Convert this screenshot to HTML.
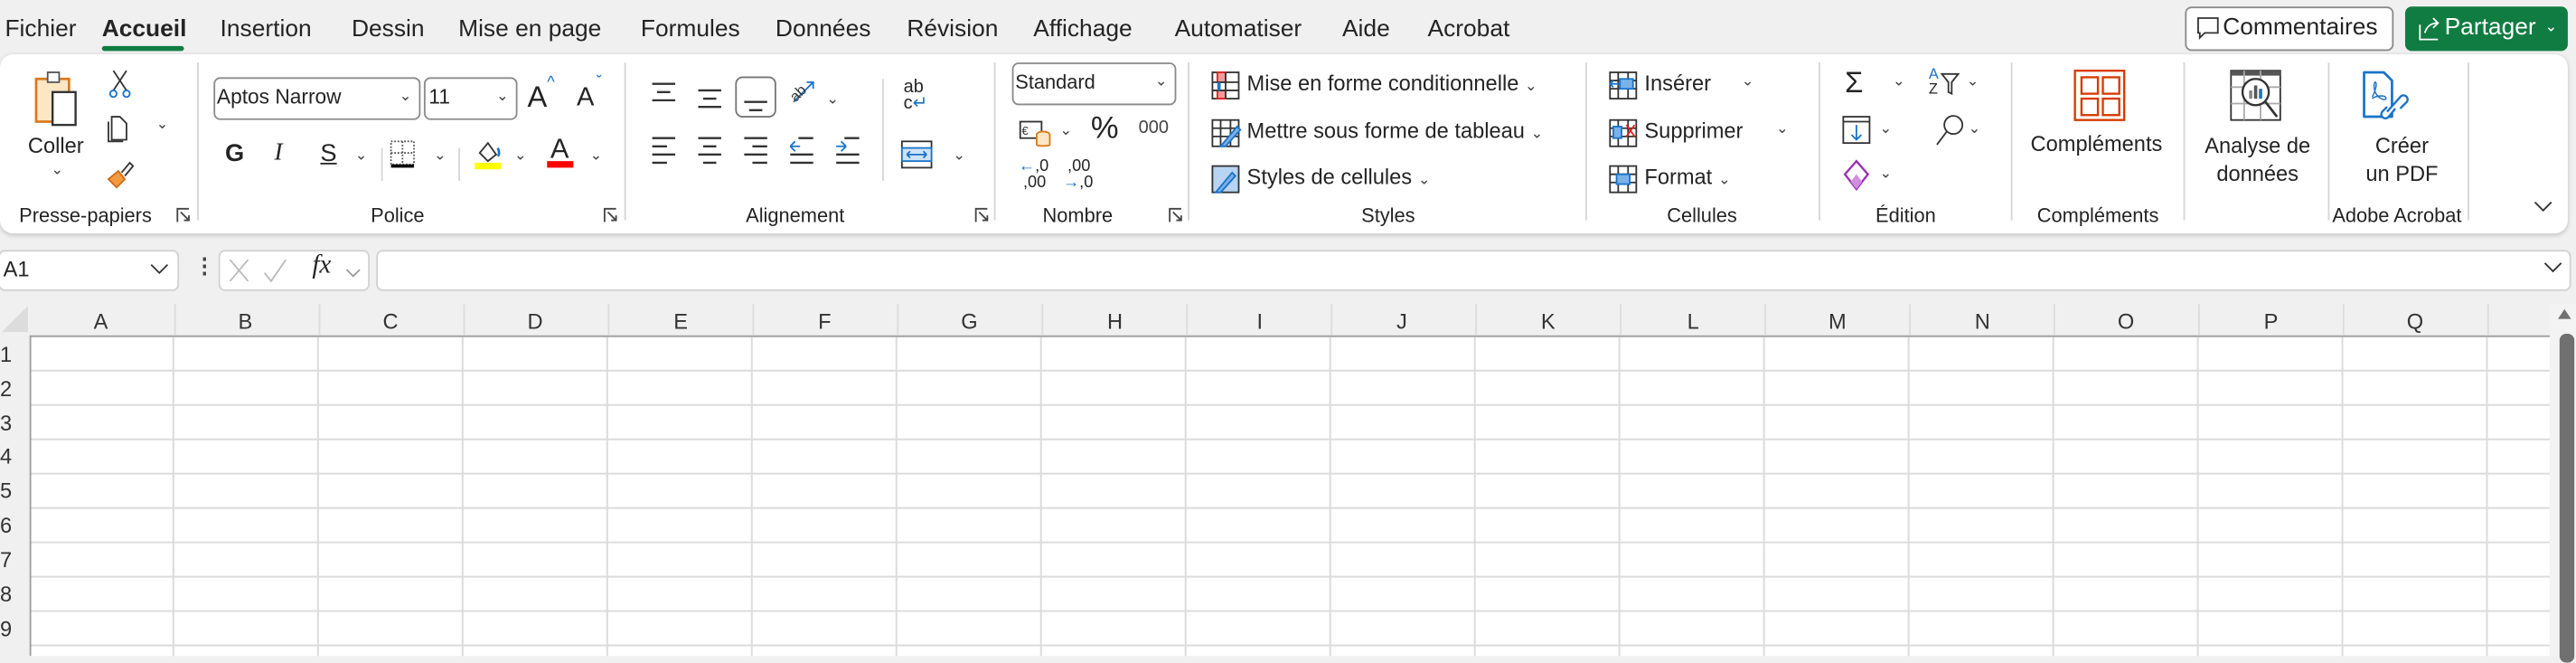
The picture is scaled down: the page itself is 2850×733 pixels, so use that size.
<!DOCTYPE html>
<html><head><meta charset="utf-8">
<style>
html,body{margin:0;padding:0;width:2850px;height:724px;overflow:hidden;background:#f0f0f0}
#w{position:absolute;left:0;top:0;width:1568px;height:398.4px;transform:scale(1.8176);transform-origin:0 0;font-family:"Liberation Sans",sans-serif;color:#242424}
.a{position:absolute;white-space:nowrap}
.t{font-size:14.5px;top:10px}
.lbl{font-size:12px;top:124px;transform:translateX(-50%)}
.sep{position:absolute;top:42px;width:1px;height:96px;background:#d6d6d6}
.tx{font-size:13px}
.chev{font-size:9px;color:#444}
svg{position:absolute;overflow:visible}
</style></head><body><div id="w">
<div class="a t" style="left:3px">Fichier</div>
<div class="a t" style="left:62px;font-weight:bold">Accueil</div>
<div style="position:absolute;left:62px;top:28px;width:50px;height:3px;background:#107c41;border-radius:2px"></div>
<div class="a t" style="left:134px">Insertion</div>
<div class="a t" style="left:214px">Dessin</div>
<div class="a t" style="left:279px">Mise en page</div>
<div class="a t" style="left:390px">Formules</div>
<div class="a t" style="left:472px">Données</div>
<div class="a t" style="left:552px">Révision</div>
<div class="a t" style="left:629px">Affichage</div>
<div class="a t" style="left:715px">Automatiser</div>
<div class="a t" style="left:817px">Aide</div>
<div class="a t" style="left:869px">Acrobat</div>
<div style="position:absolute;left:1330px;top:4px;width:125px;height:25px;border:1px solid #8a8a8a;border-radius:4px;background:#fff"></div>
<svg style="left:1337px;top:10px" width="14" height="14"><path d="M1 1h12v9H5l-3 3v-3H1z" fill="none" stroke="#333"/></svg>
<div class="a" style="left:1353px;top:9px;font-size:14.5px">Commentaires</div>
<div style="position:absolute;left:1464px;top:4px;width:99px;height:27px;background:#107c41;border-radius:4px"></div>
<svg style="left:1471px;top:9px" width="16" height="16"><path d="M2 6v9h11M5 11c1-4 4-6 8-6M10 2l3 3-3 3" fill="none" stroke="#fff"/></svg>
<div class="a" style="left:1488px;top:9px;font-size:14.5px;color:#fff">Partager</div>
<div class="a chev" style="left:1549px;top:11px;color:#fff">&#8964;</div>

<div style="position:absolute;left:0;top:33px;width:1563px;height:109px;background:#fff;border-radius:8px;box-shadow:0 1px 3px rgba(0,0,0,.2)"></div>
<div class="sep" style="left:120px;top:38px"></div>
<div class="sep" style="left:380px;top:38px"></div>
<div class="sep" style="left:605px;top:38px"></div>
<div class="sep" style="left:723px;top:38px"></div>
<div class="sep" style="left:965px;top:38px"></div>
<div class="sep" style="left:1107px;top:38px"></div>
<div class="sep" style="left:1224px;top:38px"></div>
<div class="sep" style="left:1329px;top:38px"></div>
<div class="sep" style="left:1417px;top:38px"></div>
<div class="sep" style="left:1502px;top:38px"></div>
<div class="sep" style="left:537px;top:48px;height:62px"></div>
<div class="sep" style="left:232px;top:90px;height:20px"></div>
<div class="sep" style="left:279px;top:90px;height:20px"></div>

<div class="a lbl" style="left:52px">Presse-papiers</div>
<div class="a lbl" style="left:242px">Police</div>
<div class="a lbl" style="left:484px">Alignement</div>
<div class="a lbl" style="left:656px">Nombre</div>
<div class="a lbl" style="left:845px">Styles</div>
<div class="a lbl" style="left:1036px">Cellules</div>
<div class="a lbl" style="left:1160px">Édition</div>
<div class="a lbl" style="left:1277px">Compléments</div>
<div class="a lbl" style="left:1459px">Adobe Acrobat</div>
<svg style="left:107px;top:126px" width="9" height="10"><path d="M1 9V1h7M3 3l5 5M5 8h3V5" fill="none" stroke="#444"/></svg>
<svg style="left:367px;top:126px" width="9" height="10"><path d="M1 9V1h7M3 3l5 5M5 8h3V5" fill="none" stroke="#444"/></svg>
<svg style="left:593px;top:126px" width="9" height="10"><path d="M1 9V1h7M3 3l5 5M5 8h3V5" fill="none" stroke="#444"/></svg>
<svg style="left:711px;top:126px" width="9" height="10"><path d="M1 9V1h7M3 3l5 5M5 8h3V5" fill="none" stroke="#444"/></svg>

<svg style="left:20px;top:42px" width="32" height="36"><rect x="2" y="6" width="20" height="26" fill="#fde6c4" stroke="#d87a1e" stroke-width="1.5"/><rect x="9" y="2" width="7" height="6" fill="#fff" stroke="#555"/><rect x="12" y="14" width="14" height="20" fill="#fff" stroke="#333" stroke-width="1.3"/></svg>
<div class="a tx" style="left:17px;top:81px">Coller</div>
<div class="a chev" style="left:31px;top:98px">&#8964;</div>
<svg style="left:66px;top:42px" width="14" height="18"><path d="M3 1l8 12M11 1L3 13" stroke="#333" fill="none"/><circle cx="3" cy="15" r="2" fill="none" stroke="#1a73c8"/><circle cx="11" cy="15" r="2" fill="none" stroke="#1a73c8"/></svg>
<svg style="left:65px;top:70px" width="16" height="18"><path d="M3 1h5l4 4v10H3z" fill="none" stroke="#333"/><path d="M1 4v12h9" fill="none" stroke="#333"/></svg>
<div class="a chev" style="left:95px;top:70px">&#8964;</div>
<svg style="left:64px;top:97px" width="18" height="18"><path d="M2 12l6-5 4 5-5 5z" fill="#f29a3f" stroke="#d06a10"/><path d="M10 8l5-6 2 2-5 6" fill="none" stroke="#333"/></svg>

<div style="position:absolute;left:130px;top:47px;width:124px;height:24px;border:1px solid #8a8a8a;border-radius:4px"></div>
<div class="a tx" style="left:132px;top:52px;font-size:12.5px">Aptos Narrow</div>
<div class="a chev" style="left:243px;top:53px">&#8964;</div>
<div style="position:absolute;left:258px;top:47px;width:55px;height:24px;border:1px solid #8a8a8a;border-radius:4px"></div>
<div class="a tx" style="left:261px;top:52px;font-size:12.5px">11</div>
<div class="a chev" style="left:302px;top:53px">&#8964;</div>
<div class="a" style="left:321px;top:49px;font-size:18px">A</div><div class="a" style="left:333px;top:45px;font-size:10px;color:#1a73c8">^</div>
<div class="a" style="left:351px;top:51px;font-size:16px">A</div><div class="a" style="left:363px;top:45px;font-size:10px;color:#1a73c8">&#711;</div>
<div class="a" style="left:137px;top:85px;font-size:15px;font-weight:bold">G</div>
<div class="a" style="left:167px;top:85px;font-size:15px;font-style:italic;font-family:'Liberation Serif',serif">I</div>
<div class="a" style="left:195px;top:85px;font-size:15px;text-decoration:underline">S</div>
<div class="a chev" style="left:216px;top:89px">&#8964;</div>
<svg style="left:237px;top:85px" width="16" height="18"><rect x="1" y="1" width="14" height="14" fill="none" stroke="#555" stroke-dasharray="1 1"/><path d="M8 1v14M1 8h14" stroke="#555" stroke-dasharray="1 1"/><path d="M1 16h14" stroke="#000" stroke-width="2"/></svg>
<div class="a chev" style="left:264px;top:89px">&#8964;</div>
<svg style="left:288px;top:84px" width="20" height="20"><path d="M4 9l5-6 5 7-5 4z" fill="none" stroke="#333"/><path d="M15 6c1 2 1 4 0 5" stroke="#1a73c8" fill="none" stroke-width="1.5"/><rect x="1" y="15" width="16" height="4" fill="#ffff00"/></svg>
<div class="a chev" style="left:313px;top:89px">&#8964;</div>
<div class="a" style="left:335px;top:81px;font-size:17px">A</div>
<div style="position:absolute;left:333px;top:98px;width:16px;height:4px;background:#f00"></div>
<div class="a chev" style="left:359px;top:89px">&#8964;</div>

<svg style="left:395px;top:50px" width="140" height="70">
<g stroke="#333" stroke-width="1.3"><path d="M2 1h14M5 6h8M2 11h14"/><path d="M30 5h14M33 10h8M30 15h14"/>
<path d="M2 34h14M2 39h9M2 44h14M2 49h9M30 34h14M33 39h8M30 44h14M33 49h8M58 34h14M63 39h9M58 44h14M63 49h9M91 34h9M86 44h14M86 49h14M119 34h9M114 44h14M114 49h14"/>
<path d="M58 12h14M61 17h8"/></g>
<rect x="53" y="-3" width="24" height="24" rx="4" fill="none" stroke="#777"/>
<path d="M86 39h6M86 39l3-3M86 39l3 3M114 39h6M120 39l-3-3M120 39l-3 3" stroke="#1a73c8" fill="none"/>
<path d="M88 12l12-12M96 0h4v4" stroke="#1a73c8" fill="none"/><text x="85" y="10" font-size="9" transform="rotate(-45 90 6)" fill="#333">ab</text>
</svg>
<div class="a chev" style="left:503px;top:55px">&#8964;</div>
<div class="a" style="left:550px;top:48px;font-size:11px;line-height:10px">ab<br>c<span style="color:#1a73c8">&#8629;</span></div>
<svg style="left:548px;top:85px" width="20" height="18"><rect x="1" y="1" width="18" height="16" fill="none" stroke="#333"/><rect x="1" y="5" width="18" height="8" fill="#cfe3f7" stroke="#1a73c8"/><path d="M4 9h12M4 9l2-2M4 9l2 2M16 9l-2-2M16 9l-2 2" stroke="#1a73c8" fill="none"/></svg>
<div class="a chev" style="left:580px;top:89px">&#8964;</div>

<div style="position:absolute;left:616px;top:38px;width:98px;height:24px;border:1px solid #8a8a8a;border-radius:4px"></div>
<div class="a tx" style="left:618px;top:43px;font-size:12px">Standard</div>
<div class="a chev" style="left:703px;top:44px">&#8964;</div>
<svg style="left:620px;top:72px" width="20" height="20"><rect x="1" y="2" width="13" height="10" fill="none" stroke="#333"/><text x="2" y="10" font-size="7" fill="#333">€</text><ellipse cx="15" cy="10" rx="4" ry="2" fill="#fde6c4" stroke="#d87a1e"/><path d="M11 10v6c0 1 8 1 8 0v-6" fill="#fde6c4" stroke="#d87a1e"/></svg>
<div class="a chev" style="left:645px;top:74px">&#8964;</div>
<div class="a" style="left:664px;top:68px;font-size:19px">%</div>
<div class="a" style="left:693px;top:72px;font-size:11px;color:#444">000</div>
<div class="a" style="left:620px;top:97px;font-size:10px;line-height:10px"><span style="color:#1a73c8">&#8592;</span>,0<br>&nbsp;,00</div>
<div class="a" style="left:647px;top:97px;font-size:10px;line-height:10px">&nbsp;,00<br><span style="color:#1a73c8">&#8594;</span>,0</div>

<svg style="left:737px;top:43px" width="18" height="18"><rect x="1" y="1" width="16" height="16" fill="#fff" stroke="#333"/><rect x="4" y="1" width="5" height="6" fill="#f59a9a" stroke="#e02020"/><rect x="4" y="12" width="5" height="5" fill="#f59a9a" stroke="#e02020"/><path d="M1 7h16M1 12h16M9 1v16" stroke="#333"/><rect x="4" y="7" width="2" height="5" fill="#1a73c8"/></svg>
<div class="a tx" style="left:759px;top:43px">Mise en forme conditionnelle <span class="chev">&#8964;</span></div>
<svg style="left:737px;top:72px" width="18" height="18"><rect x="1" y="1" width="16" height="16" fill="#fff" stroke="#333"/><path d="M1 6h16M1 11h16M6 1v16M12 1v16" stroke="#333"/><path d="M6 17l10-12 2 2-9 10z" fill="#7ab1e8" stroke="#1a73c8"/></svg>
<div class="a tx" style="left:759px;top:72px">Mettre sous forme de tableau <span class="chev">&#8964;</span></div>
<svg style="left:737px;top:100px" width="18" height="18"><rect x="1" y="1" width="16" height="16" fill="#b7d4f2" stroke="#333"/><path d="M3 17l10-12 2 2-9 10z" fill="#7ab1e8" stroke="#1a73c8"/></svg>
<div class="a tx" style="left:759px;top:100px">Styles de cellules <span class="chev">&#8964;</span></div>

<svg style="left:979px;top:43px" width="18" height="18"><rect x="1" y="1" width="16" height="16" fill="#fff" stroke="#333"/><path d="M1 6h16M1 11h16M6 1v16M12 1v16" stroke="#333"/><rect x="7" y="5" width="8" height="6" fill="#7ab1e8" stroke="#1a73c8"/><path d="M1 8h6M1 8l2-2M1 8l2 2" stroke="#1a73c8" fill="none"/></svg>
<div class="a tx" style="left:1001px;top:43px">Insérer</div><div class="a chev" style="left:1060px;top:44px">&#8964;</div>
<svg style="left:979px;top:72px" width="18" height="18"><rect x="1" y="1" width="16" height="16" fill="#fff" stroke="#333"/><path d="M1 6h16M1 11h16M6 1v16M12 1v16" stroke="#333"/><rect x="3" y="5" width="5" height="7" fill="#7ab1e8" stroke="#1a73c8"/><path d="M11 4l5 7M16 4l-5 7" stroke="#e02020"/></svg>
<div class="a tx" style="left:1001px;top:72px">Supprimer</div><div class="a chev" style="left:1081px;top:73px">&#8964;</div>
<svg style="left:979px;top:100px" width="18" height="18"><rect x="1" y="1" width="16" height="16" fill="#fff" stroke="#333"/><path d="M1 6h16M1 11h16M6 1v16M12 1v16" stroke="#333"/><rect x="5" y="6" width="8" height="6" fill="#7ab1e8" stroke="#1a73c8"/></svg>
<div class="a tx" style="left:1001px;top:100px">Format <span class="chev">&#8964;</span></div>

<div class="a" style="left:1123px;top:40px;font-size:18px">&Sigma;</div><div class="a chev" style="left:1152px;top:44px">&#8964;</div>
<div class="a" style="left:1174px;top:41px;font-size:9px;line-height:9px"><span style="color:#1a73c8">A</span><br>Z</div>
<svg style="left:1181px;top:44px" width="12" height="14"><path d="M1 1h10l-4 5v7l-2-1V6z" fill="none" stroke="#333"/></svg>
<div class="a chev" style="left:1197px;top:44px">&#8964;</div>
<svg style="left:1121px;top:70px" width="18" height="18"><rect x="1" y="1" width="16" height="16" fill="#fff" stroke="#333"/><path d="M1 4h16" stroke="#333"/><path d="M9 6v9M6 12l3 3 3-3" stroke="#1a73c8" fill="none"/></svg>
<div class="a chev" style="left:1144px;top:73px">&#8964;</div>
<svg style="left:1178px;top:69px" width="18" height="20"><circle cx="11" cy="7" r="5.5" fill="none" stroke="#333"/><path d="M7 11l-6 8" stroke="#333"/></svg>
<div class="a chev" style="left:1198px;top:73px">&#8964;</div>
<svg style="left:1122px;top:97px" width="16" height="20"><path d="M8 1l7 8-7 9-7-9z" fill="#fff" stroke="#9b30b0" stroke-width="1.3"/><path d="M4.5 13.5l3.5-4.5 3.5 4.5-3.5 4.5z" fill="#cf8fde"/></svg>
<div class="a chev" style="left:1144px;top:100px">&#8964;</div>

<svg style="left:1262px;top:42px" width="32" height="32"><rect x="1" y="1" width="30" height="30" fill="none" stroke="#d83b01" stroke-width="1.3"/><rect x="5" y="5" width="10" height="10" fill="none" stroke="#d83b01" stroke-width="1.3"/><rect x="18" y="5" width="10" height="10" fill="none" stroke="#d83b01" stroke-width="1.3"/><rect x="5" y="18" width="10" height="10" fill="none" stroke="#d83b01" stroke-width="1.3"/><rect x="18" y="18" width="10" height="10" fill="none" stroke="#d83b01" stroke-width="1.3"/></svg>
<div class="a tx" style="left:1236px;top:80px">Compléments</div>
<svg style="left:1357px;top:42px" width="34" height="32"><rect x="1" y="1" width="30" height="30" fill="#fff" stroke="#333"/><rect x="1" y="1" width="30" height="3" fill="#555"/><path d="M1 11h30M1 21h30M9 1v30M19 1v30" stroke="#aaa"/><circle cx="16" cy="14" r="8" fill="#fff" stroke="#333" stroke-width="1.3"/><rect x="12" y="13" width="2" height="5" fill="#888"/><rect x="15" y="10" width="2" height="8" fill="#555"/><rect x="18" y="12" width="2" height="6" fill="#1a73c8"/><path d="M22 20l7 9" stroke="#333" stroke-width="1.5"/></svg>
<div class="a tx" style="left:1342px;top:80px;text-align:center;line-height:17px">Analyse de<br>données</div>
<svg style="left:1436px;top:43px" width="34" height="36"><path d="M3 1h12l5 5v22H3z" fill="none" stroke="#1a73c8" stroke-width="1.5" stroke-linejoin="round"/><path d="M8 16c2-4 3-8 2-9s-2 6 2 9 5 1 4 0-6-1-8 1" fill="none" stroke="#1a73c8" stroke-width=".8"/><path d="M17 25l8-9a2.5 2.5 0 014 3l-4 4M22 23l-4 5a2.5 2.5 0 01-4-3l3-3" fill="#fff" stroke="#1a73c8" stroke-width="1.3"/></svg>
<div class="a tx" style="left:1440px;top:80px;text-align:center;line-height:17px">Créer<br>un PDF</div>
<svg style="left:1542px;top:122px" width="12" height="8"><path d="M1 1l5 5 5-5" fill="none" stroke="#333"/></svg>

<div style="position:absolute;left:-1px;top:152px;width:108px;height:23px;border:1px solid #d2d2d2;border-radius:4px;background:#fff"></div>
<div class="a" style="left:2px;top:156px;font-size:13px">A1</div>
<svg style="left:91px;top:160px" width="12" height="8"><path d="M1 1l5 5 5-5" fill="none" stroke="#333"/></svg>
<div class="a" style="left:118px;top:154px;font-size:13px;font-weight:bold;color:#444">&#8942;</div>
<div style="position:absolute;left:133px;top:152px;width:90px;height:23px;border:1px solid #d2d2d2;border-radius:4px;background:#fff"></div>
<svg style="left:139px;top:157px" width="90" height="16"><path d="M1 1l11 13M12 1L1 14" stroke="#bbb"/><path d="M22 9l4 5 9-13" stroke="#bbb" fill="none"/><path d="M72 7l4 4 4-4" stroke="#999" fill="none"/></svg>
<div class="a" style="left:190px;top:153px;font-size:16px;font-style:italic;font-family:'Liberation Serif',serif">fx</div>
<div style="position:absolute;left:229px;top:152px;width:1334px;height:23px;border:1px solid #d2d2d2;border-radius:4px;background:#fff"></div>
<svg style="left:1548px;top:159px" width="12" height="8"><path d="M1 1l5 5 5-5" fill="none" stroke="#333"/></svg>

<div style="position:absolute;left:18.2px;top:204.7px;width:1534px;height:194px;background:#fff;
background-image:linear-gradient(90deg,#dcdcdc 1px,transparent 1px),linear-gradient(#dcdcdc 1px,transparent 1px);
background-size:88.03px 20.9px;background-position:-1px -1px"></div>
<div style="position:absolute;left:18px;top:204px;width:1534px;height:1px;background:#9e9e9e"></div>
<div style="position:absolute;left:17.7px;top:204px;width:1px;height:195px;background:#9e9e9e"></div>
<svg style="left:1px;top:186px" width="16" height="17"><path d="M16 0v16H0z" fill="#dcdcdc"/></svg>
<div style="position:absolute;left:1552px;top:185px;width:16px;height:214px;background:#f3f3f3"></div>
<svg style="left:1556px;top:187px" width="10" height="8"><path d="M1 7l4-6 4 6z" fill="#707070"/></svg>
<div style="position:absolute;left:1558px;top:203px;width:9px;height:200px;background:#707070;border-radius:4px"></div>
<div style="font-size:13px;color:#333">
<div class="a" style="left:57px;top:188px">A</div><div class="a" style="left:145px;top:188px">B</div><div class="a" style="left:233px;top:188px">C</div><div class="a" style="left:321px;top:188px">D</div><div class="a" style="left:410px;top:188px">E</div><div class="a" style="left:498px;top:188px">F</div><div class="a" style="left:585px;top:188px">G</div><div class="a" style="left:674px;top:188px">H</div><div class="a" style="left:765px;top:188px">I</div><div class="a" style="left:850px;top:188px">J</div><div class="a" style="left:938px;top:188px">K</div><div class="a" style="left:1027px;top:188px">L</div><div class="a" style="left:1113px;top:188px">M</div><div class="a" style="left:1202px;top:188px">N</div><div class="a" style="left:1289px;top:188px">O</div><div class="a" style="left:1378px;top:188px">P</div><div class="a" style="left:1465px;top:188px">Q</div>
<div style="position:absolute;left:106.2px;top:185px;width:1px;height:19px;background:#dcdcdc;box-shadow:88px 0 #dcdcdc,176px 0 #dcdcdc,264px 0 #dcdcdc,352px 0 #dcdcdc,440px 0 #dcdcdc,528px 0 #dcdcdc,616px 0 #dcdcdc,704px 0 #dcdcdc,792px 0 #dcdcdc,880px 0 #dcdcdc,968px 0 #dcdcdc,1056px 0 #dcdcdc,1144px 0 #dcdcdc,1232px 0 #dcdcdc,1320px 0 #dcdcdc,1408px 0 #dcdcdc"></div>
<div class="a" style="left:0;top:208px">1</div><div class="a" style="left:0;top:229px">2</div><div class="a" style="left:0;top:250px">3</div><div class="a" style="left:0;top:270px">4</div><div class="a" style="left:0;top:291px">5</div><div class="a" style="left:0;top:312px">6</div><div class="a" style="left:0;top:333px">7</div><div class="a" style="left:0;top:354px">8</div><div class="a" style="left:0;top:375px">9</div>
</div>
</div></body></html>
